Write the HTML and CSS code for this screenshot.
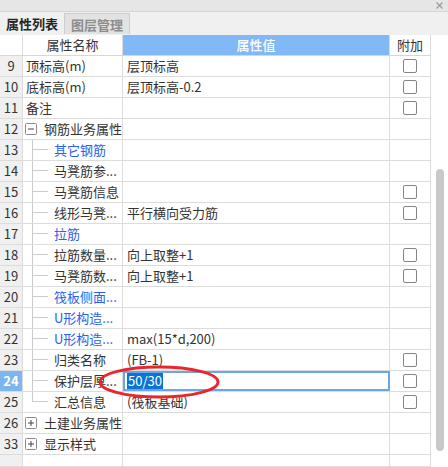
FILE: index.html
```html
<!DOCTYPE html>
<html lang="zh-CN">

<head>
  <meta charset="UTF-8" />
  <meta name="viewport" content="width=device-width, initial-scale=1.0" />
  <title>属性列表</title>
  <link rel="stylesheet" href="styles.css">
</head>

<body>
  <article class="panel">
    <header class="titlebar">
      <svg class="close" width="7" height="7" viewBox="0 0 7 7">
        <path d="M0.5 0.5L6.5 6.5M6.5 0.5L0.5 6.5" stroke="#9a9a9a" stroke-width="1.2" fill="none" />
      </svg>
    </header>
    <nav class="tabs">
      <div class="tab active">属性列表</div>
      <div class="tab">图层管理</div>
    </nav>
    <section class="body">
      <div class="grid">
        <div class="row head">
          <div class="num"></div>
          <div class="name">属性名称</div>
          <div class="val">属性值</div>
          <div class="add">附加</div>
        </div>
        <div class="row">
          <div class="num">9</div>
          <div class="name">顶标高(m)</div>
          <div class="val">层顶标高</div>
          <div class="add"><i class="box"></i></div>
        </div>
        <div class="row">
          <div class="num">10</div>
          <div class="name">底标高(m)</div>
          <div class="val">层顶标高-0.2</div>
          <div class="add"><i class="box"></i></div>
        </div>
        <div class="row">
          <div class="num">11</div>
          <div class="name">备注</div>
          <div class="val"></div>
          <div class="add"><i class="box"></i></div>
        </div>
        <div class="row">
          <div class="num">12</div>
          <div class="name"><svg class="toggle" width="12" height="12" viewBox="0 0 12 12"><rect x="0.5" y="0.5" width="11" height="11" rx="1" fill="#fff" stroke="#8a8a8a" /><path d="M3 6H9" stroke="#444" /></svg>钢筋业务属性</div>
          <div class="val"></div>
          <div class="add"></div>
        </div>
        <div class="row">
          <div class="num">13</div>
          <div class="name"><span class="tree"></span><span class="blue">其它钢筋</span></div>
          <div class="val"></div>
          <div class="add"></div>
        </div>
        <div class="row">
          <div class="num">14</div>
          <div class="name"><span class="tree"></span>马凳筋参...</div>
          <div class="val"></div>
          <div class="add"></div>
        </div>
        <div class="row">
          <div class="num">15</div>
          <div class="name"><span class="tree"></span>马凳筋信息</div>
          <div class="val"></div>
          <div class="add"><i class="box"></i></div>
        </div>
        <div class="row">
          <div class="num">16</div>
          <div class="name"><span class="tree"></span>线形马凳...</div>
          <div class="val">平行横向受力筋</div>
          <div class="add"><i class="box"></i></div>
        </div>
        <div class="row">
          <div class="num">17</div>
          <div class="name"><span class="tree"></span><span class="blue">拉筋</span></div>
          <div class="val"></div>
          <div class="add"></div>
        </div>
        <div class="row">
          <div class="num">18</div>
          <div class="name"><span class="tree"></span>拉筋数量...</div>
          <div class="val">向上取整+1</div>
          <div class="add"><i class="box"></i></div>
        </div>
        <div class="row">
          <div class="num">19</div>
          <div class="name"><span class="tree"></span>马凳筋数...</div>
          <div class="val">向上取整+1</div>
          <div class="add"><i class="box"></i></div>
        </div>
        <div class="row">
          <div class="num">20</div>
          <div class="name"><span class="tree"></span><span class="blue">筏板侧面...</span></div>
          <div class="val"></div>
          <div class="add"></div>
        </div>
        <div class="row">
          <div class="num">21</div>
          <div class="name"><span class="tree"></span><span class="blue">U形构造...</span></div>
          <div class="val"></div>
          <div class="add"></div>
        </div>
        <div class="row">
          <div class="num">22</div>
          <div class="name"><span class="tree"></span><span class="blue">U形构造...</span></div>
          <div class="val">max(15*d,200)</div>
          <div class="add"></div>
        </div>
        <div class="row">
          <div class="num">23</div>
          <div class="name"><span class="tree"></span>归类名称</div>
          <div class="val">(FB-1)</div>
          <div class="add"><i class="box"></i></div>
        </div>
        <div class="row current">
          <div class="num">24</div>
          <div class="name"><span class="tree"></span>保护层厚...</div>
          <div class="val"><span class="picked">50/30</span></div>
          <div class="add"><i class="box"></i></div>
        </div>
        <div class="row">
          <div class="num">25</div>
          <div class="name"><span class="tree last"></span>汇总信息</div>
          <div class="val">(筏板基础)</div>
          <div class="add"><i class="box"></i></div>
        </div>
        <div class="row">
          <div class="num">26</div>
          <div class="name"><svg class="toggle" width="12" height="12" viewBox="0 0 12 12"><rect x="0.5" y="0.5" width="11" height="11" rx="1" fill="#fff" stroke="#8a8a8a" /><path d="M3 6H9M6 3V9" stroke="#444" /></svg>土建业务属性</div>
          <div class="val"></div>
          <div class="add"></div>
        </div>
        <div class="row">
          <div class="num">33</div>
          <div class="name"><svg class="toggle" width="12" height="12" viewBox="0 0 12 12"><rect x="0.5" y="0.5" width="11" height="11" rx="1" fill="#fff" stroke="#8a8a8a" /><path d="M3 6H9M6 3V9" stroke="#444" /></svg>显示样式</div>
          <div class="val"></div>
          <div class="add"></div>
        </div>
        <div class="row filler">
          <div class="num"></div>
          <div class="name"></div>
          <div class="val"></div>
          <div class="add"></div>
        </div>
      </div>
      <div class="scroll">
        <div class="thumb"></div>
      </div>
    </section>
    <svg class="mark" width="126" height="38" viewBox="0 0 126 38">
      <ellipse cx="63" cy="19" rx="59" ry="15" fill="none" stroke="#e8262b" stroke-width="3" />
    </svg>
  </article>
</body>

</html>
```

FILE: styles.css
```css
body {
  margin: 0;
  background-color: #ffffff;
  font-family: "Noto Sans CJK SC", "Noto Sans", sans-serif;
  font-size: 13px;
  color: #333333;
}

.panel {
  position: relative;
  width: 448px;
  height: 467px;
  overflow: hidden;
}

.titlebar {
  display: flex;
  justify-content: flex-end;
  align-items: center;
  height: 11px;
  padding-right: 5px;
  background-color: #e6e6e6;
  border-bottom: 1px solid #d4d4d4;
}

.tabs {
  display: flex;
  height: 23px;
  background-color: #f0f0f0;
}

.tab {
  display: flex;
  align-items: center;
  justify-content: center;
  box-sizing: border-box;
  width: 66px;
  margin-top: 1px;
  height: 21px;
  font-weight: bold;
  color: #8c8c8c;
  background-color: #e2e2e2;
  border: 1px solid #cdcdcd;
  border-bottom: none;
}

.tab.active {
  width: 64px;
  margin-top: 0;
  height: 23px;
  color: #262626;
  background-color: #f0f0f0;
  border: none;
}

.body {
  display: flex;
}

.grid {
  width: 431px;
}

.row {
  display: flex;
  box-sizing: border-box;
  height: 21px;
  border-bottom: 1px solid #dcdcdc;
  line-height: 20px;
}

.row > div {
  box-sizing: border-box;
  height: 20px;
  border-right: 1px solid #dcdcdc;
  white-space: nowrap;
  overflow: hidden;
}

.num {
  width: 23px;
  text-align: center;
  background-color: #f0f0f0;
}

.name {
  display: flex;
  align-items: center;
  width: 100px;
  padding-left: 3px;
}

.val {
  width: 267px;
  padding-left: 4px;
}

.add {
  display: flex;
  align-items: center;
  justify-content: center;
  width: 41px;
}

.head .num {
  background-color: #ffffff;
}

.head .name {
  justify-content: center;
  padding-left: 0;
}

.head .val {
  padding-left: 0;
  text-align: center;
  color: #ffffff;
  background-color: #80b9f6;
  font-weight: 500;
}

.head {
  border-bottom-color: #d0d8e2;
}

.box {
  display: block;
  box-sizing: border-box;
  width: 14px;
  height: 14px;
  border: 1px solid #858585;
  border-radius: 2px;
  background-color: #ffffff;
}

.toggle {
  flex: none;
  margin-left: -1px;
  margin-right: 7px;
}

.tree {
  flex: none;
  align-self: stretch;
  width: 16px;
  margin-left: 6px;
  margin-right: 6px;
  background: linear-gradient(#cccccc, #cccccc) 0 0 / 1px 100% no-repeat,
    linear-gradient(#cccccc, #cccccc) 0 9px / 100% 1px no-repeat;
}

.tree.last {
  background-size: 1px 10px, 100% 1px;
}

.blue {
  color: #2b5ff0;
}

.current .num {
  color: #ffffff;
  font-weight: bold;
  background-color: #7db5f1;
}

.current .val {
  padding-left: 2px;
  border: 2px solid #6ca6e8;
  line-height: 16px;
}

.picked {
  display: inline-block;
  padding: 0 1px;
  color: #ffffff;
  background-color: #0a74d4;
}

.filler {
  height: 12px;
}

.filler > div {
  height: 11px;
}

.scroll {
  width: 17px;
}

.thumb {
  width: 8px;
  height: 282px;
  margin-top: 134px;
  margin-left: 5px;
  border-radius: 4px;
  background-color: #c9c9c9;
}

.mark {
  position: absolute;
  left: 96px;
  top: 363px;
}
```
